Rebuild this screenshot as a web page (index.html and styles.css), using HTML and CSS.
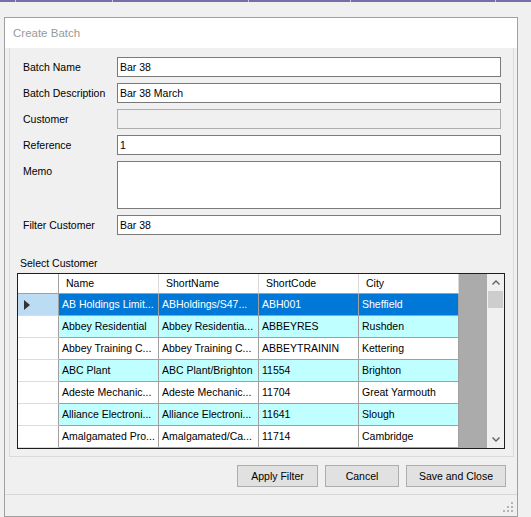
FILE: index.html
```html
<!DOCTYPE html>
<html lang="en">
<head>
    <meta charset="UTF-8">
    <title>Create Batch</title>
    <link rel="stylesheet" href="styles.css">
</head>
<body>
    <div class="taskbar">
        <span class="seg seg-a"></span>
        <span class="seg seg-b"></span>
        <span class="seg seg-c"></span>
        <span class="seg seg-d"></span>
        <span class="seg seg-e"></span>
        <span class="seg seg-f"></span>
    </div>

    <div class="window">
        <div class="titlebar">Create Batch</div>

        <div class="panel">
            <div class="form">
                <div class="field">
                    <span class="field-label">Batch Name</span>
                    <div class="textbox">Bar 38</div>
                </div>
                <div class="field">
                    <span class="field-label">Batch Description</span>
                    <div class="textbox">Bar 38 March</div>
                </div>
                <div class="field">
                    <span class="field-label">Customer</span>
                    <div class="textbox disabled"></div>
                </div>
                <div class="field">
                    <span class="field-label">Reference</span>
                    <div class="textbox">1</div>
                </div>
                <div class="field">
                    <span class="field-label">Memo</span>
                    <div class="textbox memo"></div>
                </div>
                <div class="field">
                    <span class="field-label">Filter Customer</span>
                    <div class="textbox">Bar 38</div>
                </div>
            </div>

            <div class="grid-caption">Select Customer</div>

            <div class="grid">
                <div class="grid-body">
                    <div class="grid-row grid-head">
                        <div class="row-head"></div>
                        <div class="cell">Name</div>
                        <div class="cell">ShortName</div>
                        <div class="cell">ShortCode</div>
                        <div class="cell">City</div>
                    </div>
                    <div class="grid-row selected">
                        <div class="row-head"><span class="current"></span></div>
                        <div class="cell">AB Holdings Limit...</div>
                        <div class="cell">ABHoldings/S47...</div>
                        <div class="cell">ABH001</div>
                        <div class="cell">Sheffield</div>
                    </div>
                    <div class="grid-row alt">
                        <div class="row-head"></div>
                        <div class="cell">Abbey Residential</div>
                        <div class="cell">Abbey Residentia...</div>
                        <div class="cell">ABBEYRES</div>
                        <div class="cell">Rushden</div>
                    </div>
                    <div class="grid-row">
                        <div class="row-head"></div>
                        <div class="cell">Abbey Training C...</div>
                        <div class="cell">Abbey Training C...</div>
                        <div class="cell">ABBEYTRAININ</div>
                        <div class="cell">Kettering</div>
                    </div>
                    <div class="grid-row alt">
                        <div class="row-head"></div>
                        <div class="cell">ABC Plant</div>
                        <div class="cell">ABC Plant/Brighton</div>
                        <div class="cell">11554</div>
                        <div class="cell">Brighton</div>
                    </div>
                    <div class="grid-row">
                        <div class="row-head"></div>
                        <div class="cell">Adeste Mechanic...</div>
                        <div class="cell">Adeste Mechanic...</div>
                        <div class="cell">11704</div>
                        <div class="cell">Great Yarmouth</div>
                    </div>
                    <div class="grid-row alt">
                        <div class="row-head"></div>
                        <div class="cell">Alliance Electroni...</div>
                        <div class="cell">Alliance Electroni...</div>
                        <div class="cell">11641</div>
                        <div class="cell">Slough</div>
                    </div>
                    <div class="grid-row">
                        <div class="row-head"></div>
                        <div class="cell">Amalgamated Pro...</div>
                        <div class="cell">Amalgamated/Ca...</div>
                        <div class="cell">11714</div>
                        <div class="cell">Cambridge</div>
                    </div>
                </div>

                <div class="vscroll">
                    <div class="scroll-btn">
                        <svg viewBox="0 0 8 5" width="8" height="5">
                            <polyline points="0.5,4.5 4,1 7.5,4.5" fill="none" stroke="#606060" stroke-width="1.4"/>
                        </svg>
                    </div>
                    <div class="scroll-thumb"></div>
                    <div class="scroll-track"></div>
                    <div class="scroll-btn">
                        <svg viewBox="0 0 8 5" width="8" height="5">
                            <polyline points="0.5,0.5 4,4 7.5,0.5" fill="none" stroke="#606060" stroke-width="1.4"/>
                        </svg>
                    </div>
                </div>
            </div>
        </div>

        <div class="buttons">
            <button class="btn btn-apply">Apply Filter</button>
            <button class="btn btn-cancel">Cancel</button>
            <button class="btn btn-save">Save and Close</button>
        </div>

        <div class="statusbar">
            <svg class="grip" viewBox="0 0 11 11" width="11" height="11">
                <rect x="8" y="0" width="2" height="2" fill="#b4b4b4"/>
                <rect x="4" y="4" width="2" height="2" fill="#b4b4b4"/>
                <rect x="8" y="4" width="2" height="2" fill="#b4b4b4"/>
                <rect x="0" y="8" width="2" height="2" fill="#b4b4b4"/>
                <rect x="4" y="8" width="2" height="2" fill="#b4b4b4"/>
                <rect x="8" y="8" width="2" height="2" fill="#b4b4b4"/>
            </svg>
        </div>
    </div>
</body>
</html>
```

FILE: styles.css
```css
:root {
    --bg-color: #f0f0f0;
    --border-color: #a0a0a0;
    --input-border: #7a7a7a;
    --row-alt: #bfffff;
    --row-selected: #0078d7;
    --head-selected: #bcdcf4;
}

* {
    margin: 0;
    padding: 0;
    box-sizing: border-box;
}

body {
    background-color: var(--bg-color);
    font-family: "Liberation Sans", Arial, sans-serif;
    font-size: 10.5px;
    color: #000;
}

/* strip of the host window above the dialog */
.taskbar {
    display: flex;
    height: 2px;
    background: #7a6ca6;
}

.seg {
    display: block;
    height: 100%;
    border-left: 1px solid #c8c4d6;
}

.seg-a { width: 15px; border-left: none; }
.seg-b { width: 97px; }
.seg-c { width: 136px; }
.seg-d { width: 102px; }
.seg-e { width: 145px; }
.seg-f { flex: 1; }

.window {
    display: flex;
    flex-direction: column;
    width: 514px;
    height: 500px;
    margin: 15px 0 0 4px;
    border: 1px solid var(--border-color);
    background: var(--bg-color);
}

.titlebar {
    display: flex;
    align-items: center;
    height: 30px;
    padding-left: 8px;
    background: #fff;
    color: #9a9a9a;
    font-size: 11.5px;
}

.panel {
    margin: 0 3px 0 4px;
    padding: 9px 0 7px 7px;
    border: 1px solid #dadada;
    border-top: none;
}

.form {
    display: flex;
    flex-direction: column;
    gap: 6px;
    padding-left: 6px;
}

.field {
    display: flex;
    align-items: flex-start;
}

.field-label {
    width: 94px;
    line-height: 20px;
}

.textbox {
    width: 384px;
    height: 20px;
    padding: 0 2px;
    line-height: 18px;
    border: 1px solid var(--input-border);
    background: #fff;
}

.textbox.disabled {
    background: var(--bg-color);
    border-color: #adadad;
}

.textbox.memo {
    height: 48px;
}

.grid-caption {
    margin: 22px 0 3px 3px;
    line-height: 13px;
}

/* customer grid */
.grid {
    display: flex;
    width: 488px;
    height: 176px;
    border: 1px solid #1e1e1e;
}

.grid-body {
    flex: 1;
    overflow: hidden;
    background: #ababab;
}

.grid-row {
    display: flex;
    width: 441px;
    height: 22px;
}

.grid-row .row-head {
    display: flex;
    align-items: center;
    width: 41px;
    background: #fff;
    border-right: 1px solid var(--border-color);
    border-bottom: 1px solid #dcdcdc;
}

.grid-row .cell {
    width: 100px;
    padding: 0 3px;
    line-height: 21px;
    white-space: nowrap;
    overflow: hidden;
    background: #fff;
    border-right: 1px solid var(--border-color);
    border-bottom: 1px solid var(--border-color);
}

.grid-head {
    height: 20px;
}

.grid-head .row-head {
    border-bottom-color: var(--border-color);
}

.grid-head .cell {
    padding-left: 7px;
    line-height: 19px;
    border-right-color: #d8d8d8;
}

.grid-row.alt .cell {
    background: var(--row-alt);
}

.grid-row.selected .cell {
    background: var(--row-selected);
    color: #fff;
}

.grid-row.selected .row-head {
    background: var(--head-selected);
}

.current {
    width: 0;
    height: 0;
    margin-left: 6px;
    border-left: 6px solid #333;
    border-top: 5px solid transparent;
    border-bottom: 5px solid transparent;
}

.vscroll {
    display: flex;
    flex-direction: column;
    width: 17px;
    background: var(--bg-color);
}

.scroll-btn {
    display: flex;
    align-items: center;
    justify-content: center;
    height: 17px;
}

.scroll-thumb {
    height: 17px;
    margin: 0 1px;
    background: #cdcdcd;
}

.scroll-track {
    flex: 1;
}

.buttons {
    display: flex;
    justify-content: flex-end;
    gap: 7px;
    margin-top: 8px;
    padding-right: 11px;
}

.btn {
    height: 22px;
    font-family: inherit;
    font-size: 10.5px;
    color: #000;
    background: #e1e1e1;
    border: 1px solid #adadad;
}

.btn-apply { width: 81px; }
.btn-cancel { width: 74px; }
.btn-save { width: 100px; }

.statusbar {
    display: flex;
    align-items: flex-end;
    justify-content: flex-end;
    height: 22px;
    margin-top: auto;
    padding: 0 3px 3px 0;
    border-top: 1px solid #d7d7d7;
}
```
